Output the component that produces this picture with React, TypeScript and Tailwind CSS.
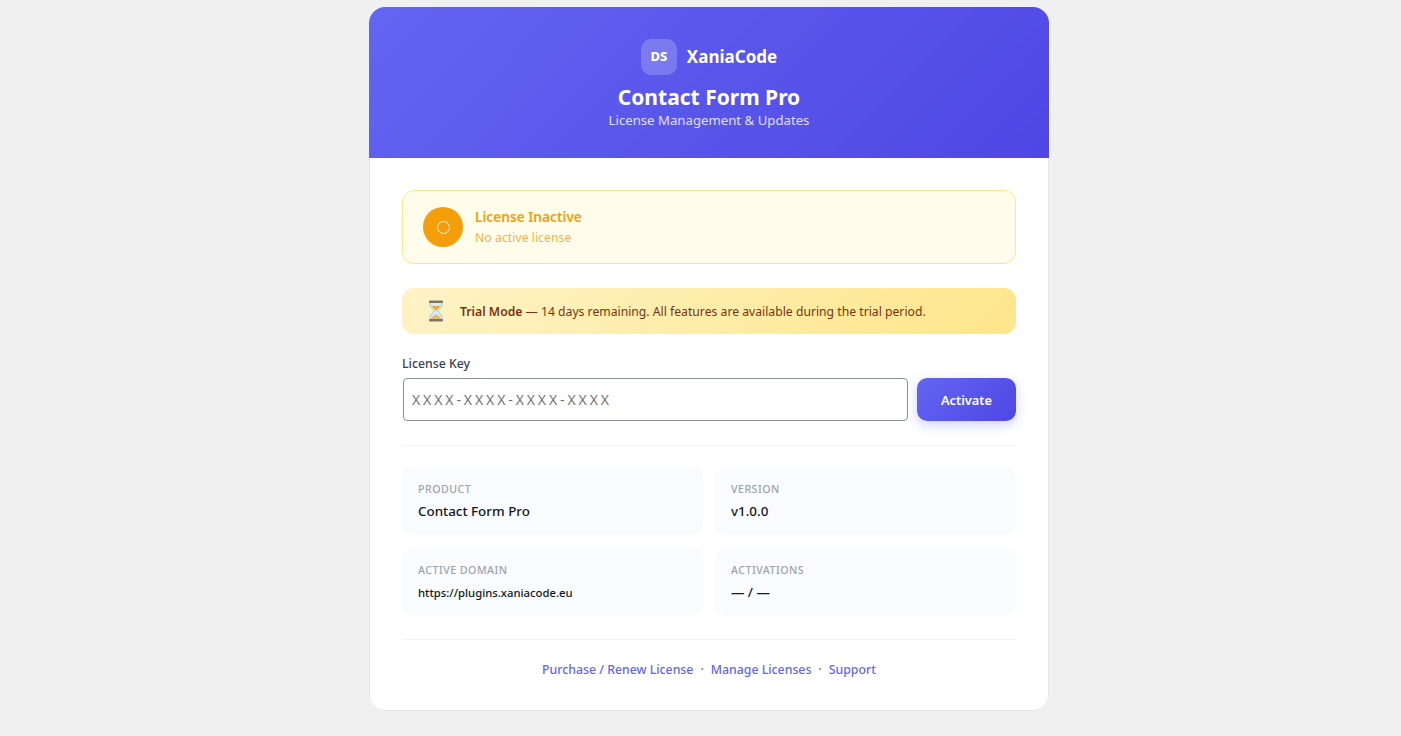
const infoItems = [
  { label: 'PRODUCT', value: 'Contact Form Pro', small: false },
  { label: 'VERSION', value: 'v1.0.0', small: false },
  { label: 'ACTIVE DOMAIN', value: 'https://plugins.xaniacode.eu', small: true },
  { label: 'ACTIVATIONS', value: '— / —', small: false },
]

function Hourglass() {
  return (
    <svg width="20" height="24" viewBox="0 0 20 24" aria-hidden="true">
      <path d="M4 3h12v3c0 3-4 4.500-4 6s4 3 4 6v3H4v-3c0-3 4-4.500 4-6S4 9 4 6z" fill="#d6ecf5" stroke="#a9bcc6" strokeWidth="0.8" />
      <path d="M5.500 7h9c-.6 2-3.800 3-4.500 5-.7-2-3.900-3-4.500-5z" fill="#e8a83c" />
      <path d="M5 20.500c.5-2.800 3.500-4.500 5-5 1.500.5 4.500 2.200 5 5z" fill="#e8b765" />
      <rect x="3" y="1.500" width="14" height="2.500" rx="1" fill="#7c7468" />
      <rect x="3" y="20" width="14" height="2.500" rx="1" fill="#7c7468" />
    </svg>
  )
}

export default function App() {
  return (
    <div className="min-h-[736px] bg-[#f0f0f1] pt-[7px] font-['Noto_Sans',sans-serif]">
      <div className="ml-[369px] w-[680px] overflow-hidden rounded-2xl bg-white">
        <div className="flex h-[151px] flex-col items-center bg-[linear-gradient(135deg,#6366f1,#4f46e5)] pt-[32px] text-white">
          <div className="flex items-center gap-[10px]">
            <div className="flex h-9 w-9 items-center justify-center rounded-[10px] bg-white/20 text-[13px] font-extrabold">DS</div>
            <span className="text-[17px] font-bold leading-9">XaniaCode</span>
          </div>
          <h1 className="mt-[7px] text-[21px] font-bold leading-[30px]">Contact Form Pro</h1>
          <p className="text-[13.200px] leading-[16px] text-white/80">License Management &amp; Updates</p>
        </div>

        <div className="rounded-b-2xl border-x border-b border-[#e5e7eb] px-8 pt-8 pb-[31px]">
          <div className="flex h-[74px] items-center gap-3 rounded-xl border border-[#fde68a] bg-[#fffceb] px-5">
            <div className="flex h-10 w-10 items-center justify-center rounded-full bg-[#f59e0b]">
              <div className="h-[13px] w-[13px] rounded-full border border-[#fef3c7]" />
            </div>
            <div>
              <div className="text-[13.700px] leading-[20px] font-semibold text-[#f59e0b]">License Inactive</div>
              <div className="mt-[2px] text-[12.300px] leading-[18px] text-[#f59e0b]/80">No active license</div>
            </div>
          </div>

          <div className="mt-6 flex h-[46px] items-center gap-[14px] rounded-xl bg-[linear-gradient(135deg,#fef3c7,#fde68a)] px-6 text-[12.200px] text-[#78350f]">
            <Hourglass />
            <p className="pt-[2px]"><strong className="font-semibold">Trial Mode</strong> — 14 days remaining. All features are available during the trial period.</p>
          </div>

          <label className="mt-[21px] block text-[12.300px] leading-[18px] font-medium text-[#374151]">License Key</label>
          <div className="mt-[5px] flex gap-[9px]">
            <input
              placeholder="XXXX-XXXX-XXXX-XXXX"
              className="ml-px h-[43px] min-w-0 flex-1 rounded border border-[#8c8f94] bg-white px-2 font-['Noto_Sans',sans-serif] text-[14px] tracking-[2.900px] outline-none placeholder:text-[#757575]"
            />
            <button className="h-[43px] w-[99px] rounded-[10px] bg-[linear-gradient(135deg,#6366f1,#4f46e5)] pt-[2px] text-[12.800px] font-semibold text-white shadow-[0_4px_12px_rgba(99,102,241,0.3)]">
              Activate
            </button>
          </div>

          <div className="mt-6 h-px bg-[#f3f4f6]" />

          <div className="mt-[21px] grid grid-cols-2 gap-x-3 gap-y-[13px]">
            {infoItems.map((item) => (
              <div key={item.label} className="h-[68px] rounded-[10px] bg-[#f9fbfc] px-4 pt-[14px]">
                <div className="text-[10.600px] leading-[16px] font-medium tracking-[0.5px] text-[#9ca3af]">{item.label}</div>
                <div className={`leading-[20px] font-medium text-[#111827] ${item.small ? 'mt-[5px] text-[11.300px]' : 'mt-[4px] text-[13.400px]'}`}>{item.value}</div>
              </div>
            ))}
          </div>

          <div className="mt-[23px] h-px bg-[#f3f4f6]" />

          <div className="mt-[21px] flex items-center justify-center gap-[7px] text-[12.300px] leading-[18px] font-medium text-[#6366f1]">
            <a href="#">Purchase / Renew License</a>
            <span className="text-[#6b7280]">·</span>
            <a href="#">Manage Licenses</a>
            <span className="text-[#6b7280]">·</span>
            <a href="#">Support</a>
          </div>
        </div>
      </div>
    </div>
  )
}
